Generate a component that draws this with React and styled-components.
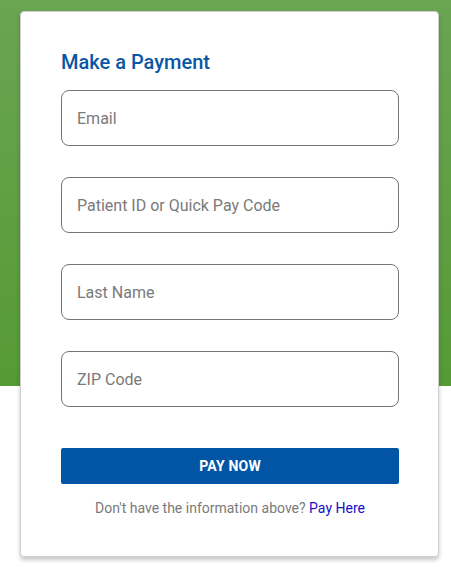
import React from "react";
import styled, { createGlobalStyle } from "styled-components";

const GlobalStyle = createGlobalStyle`
  body {
    margin: 0;
    font-family: Roboto, "Liberation Sans", sans-serif;
    background: #fff;
  }
`;

const Page = styled.div`
  min-height: 576px;
  padding: 11px 12px 0 20px;
  box-sizing: border-box;
  background: linear-gradient(
    to bottom,
    #6aa552 0,
    #569a35 386px,
    #fff 386px
  );
`;

const Card = styled.div`
  background: #fff;
  border: 1px solid #cfcfcf;
  border-radius: 4px;
  box-shadow: 0 3px 4px rgba(0, 0, 0, 0.22);
  padding: 36px 39px 39px 40px;
  display: flex;
  flex-direction: column;
`;

const Title = styled.h2`
  margin: 0 0 14px;
  font-size: 20px;
  line-height: 28px;
  font-weight: 500;
  color: #0a56a4;
`;

const Fields = styled.div`
  display: flex;
  flex-direction: column;
  gap: 31px;
`;

const Input = styled.input`
  height: 56px;
  box-sizing: border-box;
  border: 1px solid #767676;
  border-radius: 8px;
  padding: 0 15px;
  font-family: Roboto, "Liberation Sans", sans-serif;
  font-size: 16px;
  color: #333;
  outline: none;
  &::placeholder {
    color: #7a7a7a;
  }
`;

const PayButton = styled.button`
  margin-top: 41px;
  height: 36px;
  border: none;
  border-radius: 2px;
  background: #0254a5;
  color: #fff;
  font-family: Roboto, "Liberation Sans", sans-serif;
  font-size: 14px;
  font-weight: 700;
  letter-spacing: 0.2px;
  cursor: pointer;
`;

const Footer = styled.p`
  margin: 15px 0 0;
  text-align: center;
  font-size: 14px;
  line-height: 18px;
  color: #7a7a7a;
`;

const FooterLink = styled.a`
  color: #1a0dcc;
  text-decoration: none;
  cursor: pointer;
`;

const fields = ["Email", "Patient ID or Quick Pay Code", "Last Name", "ZIP Code"];

export default function App() {
  return (
    <>
      <GlobalStyle />
      <Page>
        <Card>
          <Title>Make a Payment</Title>
          <Fields>
            {fields.map((f) => (
              <Input key={f} placeholder={f} />
            ))}
          </Fields>
          <PayButton>PAY NOW</PayButton>
          <Footer>
            Don't have the information above? <FooterLink>Pay Here</FooterLink>
          </Footer>
        </Card>
      </Page>
    </>
  );
}
